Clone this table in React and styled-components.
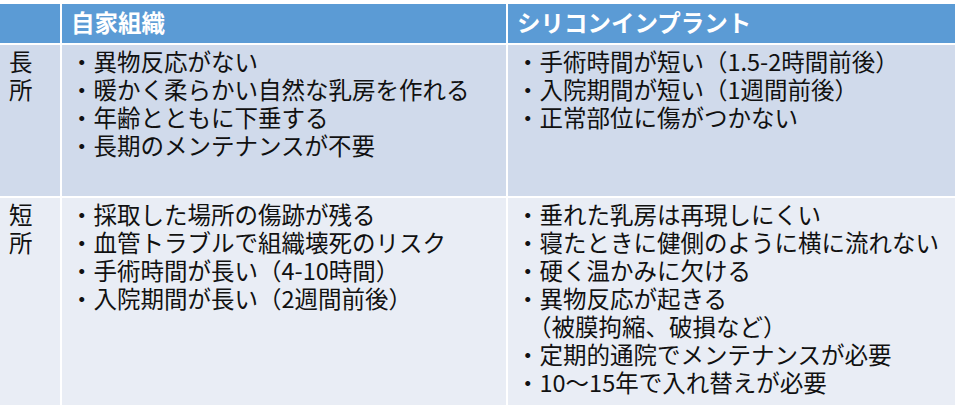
import React from 'react';
import styled, { createGlobalStyle } from 'styled-components';

const GlobalStyle = createGlobalStyle`
  body {
    margin: 0;
    background: #fff;
    font-family: "Noto Sans CJK JP", "Noto Sans", sans-serif;
  }
`;

const Table = styled.div`
  display: grid;
  grid-template-columns: 60px 444px 447px;
  grid-template-rows: 39px 151px 207px;
  gap: 2px;
  padding-top: 4px;
  width: 955px;
`;

const HeadCell = styled.div`
  background: #5b9bd5;
  color: #fff;
  font-weight: 700;
  font-size: 23.5px;
  line-height: 37px;
  padding: 0 9px;
  white-space: nowrap;
`;

const Cell = styled.div`
  background: ${({ band }) => (band === 'odd' ? '#d0daeb' : '#e9edf5')};
  color: #111;
  font-size: 23.5px;
  line-height: 28px;
  padding: 2px 8px 0;
  white-space: nowrap;
`;

const LabelCell = styled(Cell)`
  padding: 2px 0 0 9px;
  white-space: normal;
`;

const Line = styled.div`
  ${({ indent }) => indent && 'padding-left: 12px;'}
`;

const rows = [
  {
    label: ['長', '所'],
    band: 'odd',
    own: ['・異物反応がない', '・暖かく柔らかい自然な乳房を作れる', '・年齢とともに下垂する', '・長期のメンテナンスが不要'],
    implant: ['・手術時間が短い（1.5-2時間前後）', '・入院期間が短い（1週間前後）', '・正常部位に傷がつかない'],
  },
  {
    label: ['短', '所'],
    band: 'even',
    own: ['・採取した場所の傷跡が残る', '・血管トラブルで組織壊死のリスク', '・手術時間が長い（4-10時間）', '・入院期間が長い（2週間前後）'],
    implant: [
      '・垂れた乳房は再現しにくい',
      '・寝たときに健側のように横に流れない',
      '・硬く温かみに欠ける',
      '・異物反応が起きる',
      ' （被膜拘縮、破損など）',
      '・定期的通院でメンテナンスが必要',
      '・10～15年で入れ替えが必要',
    ],
  },
];

export default function App() {
  return (
    <>
      <GlobalStyle />
      <Table>
        <HeadCell />
        <HeadCell>自家組織</HeadCell>
        <HeadCell>シリコンインプラント</HeadCell>
        {rows.map(row => (
          <React.Fragment key={row.label.join('')}>
            <LabelCell band={row.band}>
              {row.label.map(ch => (
                <Line key={ch}>{ch}</Line>
              ))}
            </LabelCell>
            <Cell band={row.band}>
              {row.own.map(t => (
                <Line key={t}>{t}</Line>
              ))}
            </Cell>
            <Cell band={row.band}>
              {row.implant.map(t => (
                <Line key={t} indent={t.startsWith(' ')}>
                  {t.trim()}
                </Line>
              ))}
            </Cell>
          </React.Fragment>
        ))}
      </Table>
    </>
  );
}
